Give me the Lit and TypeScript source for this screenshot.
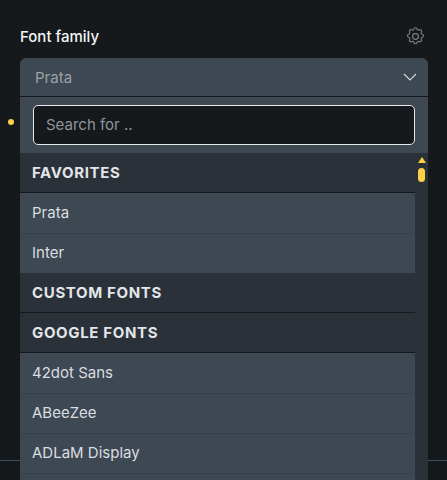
import { LitElement, html, css } from "lit";
import { customElement } from "lit/decorators.js";

@customElement("app-root")
export class AppRoot extends LitElement {
  static styles = css`
    :host {
      display: block;
      position: relative;
      width: 447px;
      height: 480px;
      overflow: hidden;
      background: #15191c;
      font-family: Inter, "Liberation Sans", sans-serif;
      font-size: 15px;
      font-optical-sizing: none;
      color: #d9dde1;
    }
    .rule {
      position: absolute;
      left: 0;
      right: 0;
      top: 460px;
      height: 1px;
      background: #3f4e5b;
    }
    .dot {
      position: absolute;
      left: 8px;
      top: 119px;
      width: 6px;
      height: 6px;
      border-radius: 50%;
      background: #ffcf45;
    }
    .field {
      position: relative;
      padding: 26px 19px 0 20px;
    }
    .head {
      display: flex;
      align-items: center;
      justify-content: space-between;
      height: 20px;
      margin-bottom: 12px;
    }
    .label {
      font-weight: 500;
      color: #f2f4f6;
    }
    .gear {
      display: block;
      width: 21px;
      height: 21px;
      margin: 0 2px 0 0;
      color: #7a8087;
    }
    .select {
      display: flex;
      align-items: center;
      justify-content: space-between;
      height: 39px;
      padding: 0 11px 0 15px;
      box-sizing: border-box;
      background: #3e4852;
      border-radius: 6px 6px 0 0;
      border-bottom: 1px solid #15191c;
      color: #9aa1a8;
    }
    .select svg {
      display: block;
      width: 14px;
      height: 8px;
      color: #d5d9dd;
    }
    .search {
      height: 56px;
      box-sizing: border-box;
      padding: 8px 13px;
      background: #3e4852;
    }
    .input {
      display: flex;
      align-items: center;
      height: 40px;
      box-sizing: border-box;
      padding: 0 12px 1px;
      background: #15191c;
      border: 1px solid #e6e8ea;
      border-radius: 5px;
      color: #8f959b;
    }
    .panel {
      display: flex;
      background: #2a3139;
    }
    .list {
      flex: 1;
      min-width: 0;
    }
    .section {
      display: flex;
      align-items: center;
      height: 40px;
      box-sizing: border-box;
      padding: 0 12px;
      background: #2a3139;
      border-bottom: 1px solid #15191c;
      font-weight: 700;
      letter-spacing: 0.65px;
      color: #e3e6e9;
    }
    .item {
      display: flex;
      align-items: center;
      height: 40px;
      box-sizing: border-box;
      padding: 0 12px 2px;
      background: #3e4852;
      border-top: 1px solid #36404a;
      color: #d9dde1;
    }
    .item.first {
      border-top: none;
      padding-bottom: 1px;
    }
    .bar {
      flex: none;
      display: flex;
      flex-direction: column;
      align-items: center;
      width: 13px;
      padding-top: 4px;
      gap: 5px;
    }
    .up {
      display: block;
      width: 0;
      height: 0;
      border-left: 4.5px solid transparent;
      border-right: 4.5px solid transparent;
      border-bottom: 6px solid #ffcf45;
    }
    .thumb {
      width: 7px;
      height: 14px;
      border-radius: 4px;
      background: #ffcf45;
    }
  `;

  render() {
    return html`
      <div class="rule"></div>
      <div class="dot"></div>
      <div class="field">
        <div class="head">
          <span class="label">Font family</span>
          <svg class="gear" viewBox="0 0 24 24" fill="none" stroke="currentColor" stroke-width="1.3" stroke-linecap="round" stroke-linejoin="round">
            <path d="M10.3 3.3c.4-1.8 3-1.8 3.4 0a1.7 1.7 0 0 0 2.6 1.1c1.5-1 3.4.9 2.4 2.4a1.7 1.7 0 0 0 1.1 2.6c1.8.4 1.8 3 0 3.4a1.7 1.7 0 0 0-1.1 2.6c1 1.5-.9 3.4-2.4 2.4a1.7 1.7 0 0 0-2.6 1.1c-.4 1.8-3 1.8-3.4 0a1.7 1.7 0 0 0-2.6-1.1c-1.5 1-3.4-.9-2.4-2.4a1.7 1.7 0 0 0-1.1-2.6c-1.8-.4-1.8-3 0-3.4a1.7 1.7 0 0 0 1.1-2.6c-1-1.5.9-3.4 2.4-2.4a1.7 1.7 0 0 0 2.6-1.1z"></path>
            <circle cx="12" cy="12" r="3.3"></circle>
          </svg>
        </div>
        <div class="select">
          <span>Prata</span>
          <svg viewBox="0 0 14 8" fill="none" stroke="currentColor" stroke-width="1.1"><path d="M1 1l6 6 6-6"></path></svg>
        </div>
        <div class="search"><div class="input">Search for ..</div></div>
        <div class="panel">
          <div class="list">
            <div class="section">FAVORITES</div>
            <div class="item first">Prata</div>
            <div class="item">Inter</div>
            <div class="section">CUSTOM FONTS</div>
            <div class="section">GOOGLE FONTS</div>
            <div class="item first">42dot Sans</div>
            <div class="item">ABeeZee</div>
            <div class="item">ADLaM Display</div>
            <div class="item"></div>
          </div>
          <div class="bar"><i class="up"></i><div class="thumb"></div></div>
        </div>
      </div>
    `;
  }
}
